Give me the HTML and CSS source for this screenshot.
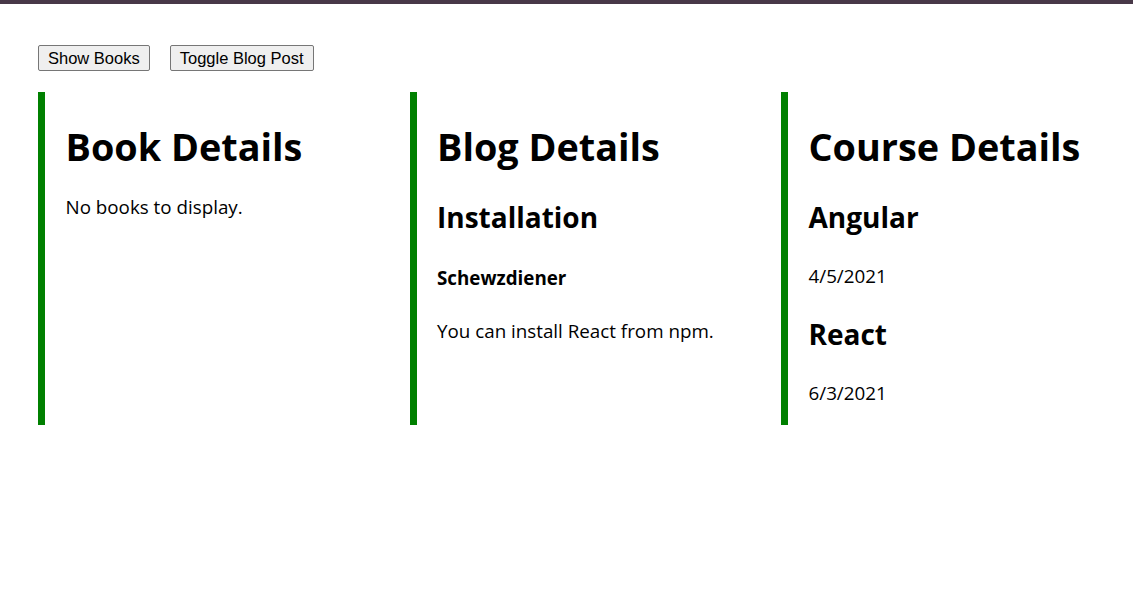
FILE: index.html
```html
<!DOCTYPE html>
<html lang="en">
<head>
<meta charset="utf-8">
<title>Details</title>
<link rel="stylesheet" href="styles.css">
</head>
<body>
<div class="topbar"></div>
<main class="page">
  <div class="actions">
    <button class="btn" type="button">Show Books</button>
    <button class="btn" type="button">Toggle Blog Post</button>
  </div>
  <div class="columns">
    <section class="col">
      <h1>Book Details</h1>
      <p>No books to display.</p>
    </section>
    <section class="col">
      <h1>Blog Details</h1>
      <h2>Installation</h2>
      <h4>Schewzdiener</h4>
      <p>You can install React from npm.</p>
    </section>
    <section class="col">
      <h1>Course Details</h1>
      <h2>Angular</h2>
      <p>4/5/2021</p>
      <h2>React</h2>
      <p>6/3/2021</p>
    </section>
  </div>
</main>
</body>
</html>
```
FILE: styles.css
```css
html, body {
  margin: 0;
  padding: 0;
  background: #ffffff;
}

body {
  font-family: "Open Sans", "Noto Sans", sans-serif;
  color: #000000;
  overflow-x: hidden;
}

.topbar {
  height: 4px;
  background: #483848;
}

.page {
  padding: 41px 0 0 38px;
}

.actions {
  display: flex;
  gap: 20px;
  align-items: flex-start;
}

.btn {
  font-family: "Liberation Sans", Arial, sans-serif;
  font-size: 16.5px;
  line-height: 18px;
  padding: 3px 9px;
  border: 1px solid #767676;
  border-radius: 2px;
  background: #efefef;
  color: #000;
  margin: 0;
}

.columns {
  display: grid;
  grid-template-columns: 371.5px 371.5px 1fr;
  margin-top: 21px;
}

.col {
  border-left: 7px solid #008000;
  padding-left: 20.5px;
}

.col h1 {
  font-size: 37.8px;
  line-height: 51px;
  font-weight: 700;
  margin: 28.6px 0 22.6px;
  white-space: nowrap;
}

.col h2 {
  font-size: 28px;
  line-height: 38px;
  font-weight: 700;
  margin: 26px 0 27px;
}

.col h4 {
  font-size: 18.8px;
  line-height: 26px;
  font-weight: 700;
  margin: 29px 0 27px;
}

.col p {
  font-size: 18.8px;
  line-height: 26px;
  margin: 19.2px 0;
}
```
